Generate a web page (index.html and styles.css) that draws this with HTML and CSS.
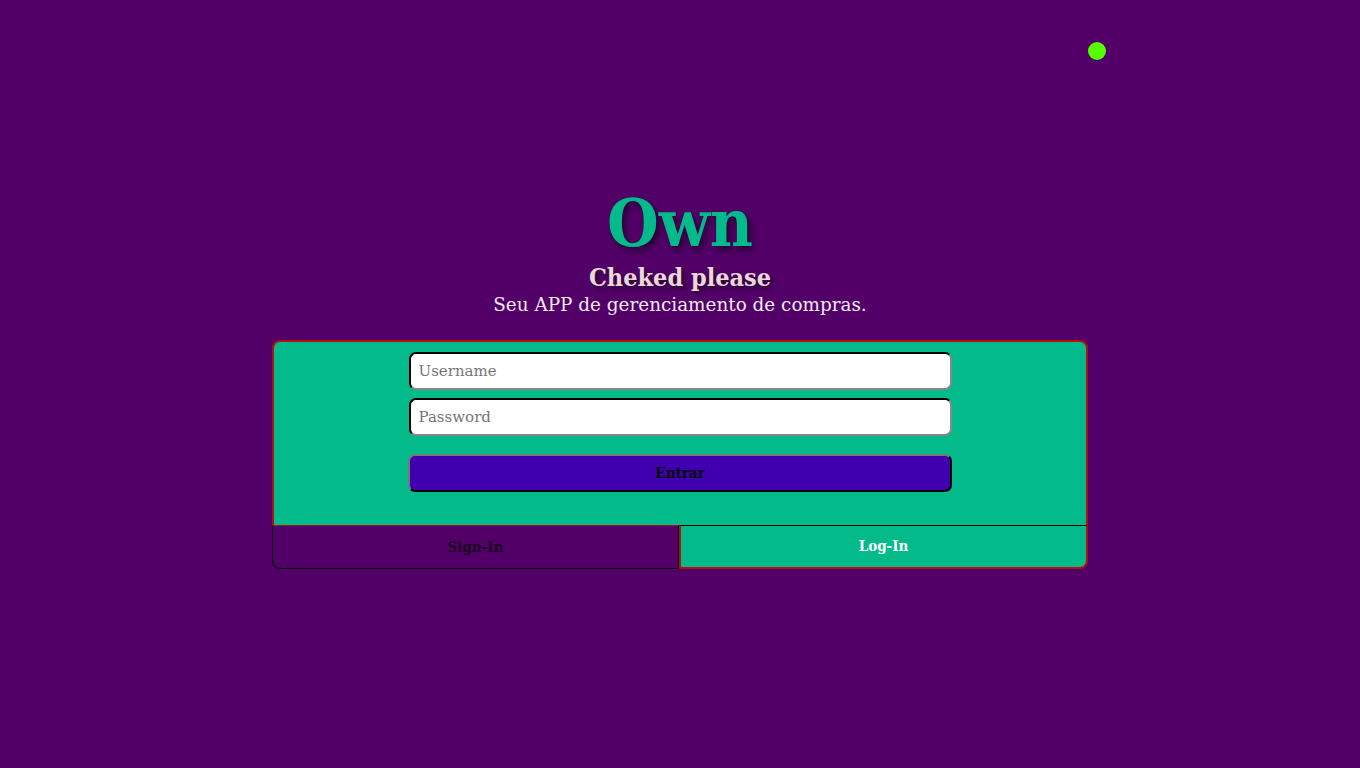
FILE: index.html
```html
<!DOCTYPE html>
<html lang="pt">
<head>
<meta charset="utf-8">
<title>Own</title>
<link rel="stylesheet" href="styles.css">
</head>
<body>
<span class="status-dot"></span>
<main class="page">
  <header class="brand">
    <h1 class="brand-title">Own</h1>
    <h2 class="brand-sub">Cheked please</h2>
    <p class="brand-desc">Seu APP de gerenciamento de compras.</p>
  </header>
  <section class="card">
    <form class="card-form">
      <input class="field" type="text" placeholder="Username">
      <input class="field" type="password" placeholder="Password">
      <button class="submit" type="button">Entrar</button>
    </form>
    <div class="tabs">
      <button class="tab tab-signin" type="button">Sign-In</button>
      <button class="tab tab-login" type="button">Log-In</button>
    </div>
  </section>
</main>
</body>
</html>
```
FILE: styles.css
```css
* { box-sizing: border-box; }
html, body { margin: 0; padding: 0; }
body {
  background: #520068;
  font-family: "DejaVu Serif", serif;
  min-height: 768px;
  position: relative;
}
.status-dot {
  position: absolute;
  left: 1088px;
  top: 42px;
  width: 18px;
  height: 18px;
  border-radius: 50%;
  background: #55ff00;
}
.page {
  display: flex;
  flex-direction: column;
  align-items: center;
  padding-top: 183px;
}
.brand {
  display: flex;
  flex-direction: column;
  align-items: center;
}
.brand-title {
  margin: 0;
  font-family: "DejaVu Serif Condensed", "DejaVu Serif", serif;
  font-size: 66px;
  line-height: 80px;
  color: #02ba8a;
  font-weight: bold;
  text-shadow: 3px 4px 6px rgba(20, 0, 30, 0.75);
}
.brand-sub {
  margin: 0;
  font-family: "DejaVu Serif Condensed", "DejaVu Serif", serif;
  font-size: 25px;
  line-height: 30px;
  color: #ead8d6;
  font-weight: bold;
  text-shadow: 3px 3px 4px rgba(20, 0, 30, 0.7);
}
.brand-desc {
  margin: 0;
  font-size: 18.4px;
  line-height: 24px;
  color: #f4eaf4;
}
.card {
  margin-top: 23px;
  width: 816px;
  display: flex;
  flex-direction: column;
}
.card-form {
  background: #02ba8a;
  border: 2px solid #b01010;
  border-bottom: none;
  border-radius: 8px 8px 0 0;
  display: flex;
  flex-direction: column;
  align-items: center;
  padding: 10px 0 33px;
  gap: 8px;
}
.field {
  width: 543px;
  height: 38px;
  border: 2px inset #777;
  border-top-color: #222;
  border-left-color: #222;
  border-right-color: #888;
  border-bottom-color: #888;
  border-radius: 7px;
  background: #fff;
  padding: 0 8px;
  font-family: "DejaVu Serif", serif;
  font-size: 15px;
  color: #222;
}
.field::placeholder { color: #757575; }
.submit {
  margin-top: 10px;
  width: 544px;
  height: 38px;
  background: #4000b0;
  border: 2px outset #888;
  border-top-color: #777;
  border-left-color: #777;
  border-right-color: #333;
  border-bottom-color: #333;
  border-radius: 7px;
  font-family: "DejaVu Serif Condensed", "DejaVu Serif", serif;
  font-weight: bold;
  font-size: 15px;
  color: #000;
}
.tabs {
  display: flex;
  height: 44px;
}
.tab {
  flex: 1;
  font-family: "DejaVu Serif Condensed", "DejaVu Serif", serif;
  font-weight: bold;
  font-size: 15px;
  margin: 0;
  padding-bottom: 2px;
}
.tab-signin {
  background: #520068;
  color: #1a0022;
  border: 1px solid #000;
  border-top: 1px solid #b01010;
  border-radius: 0 0 0 8px;
  padding-top: 2px;
}
.tab-login {
  background: #02ba8a;
  color: #fff;
  border: 2px solid #b01010;
  border-top: 1px solid #000;
  border-radius: 0 0 8px 0;
}
```
